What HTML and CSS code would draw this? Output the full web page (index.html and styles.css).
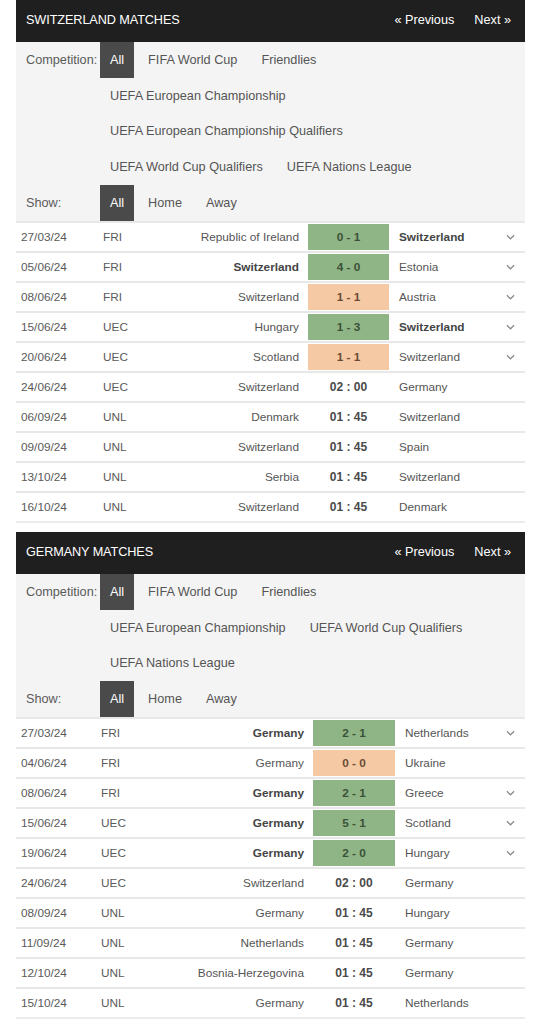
FILE: index.html
```html
<!DOCTYPE html>
<html lang="en">
<head>
<meta charset="utf-8">
<title>Matches</title>
<link rel="stylesheet" href="styles.css">
</head>
<body>
<div class="page">

  <section class="box box-sui">
    <div class="head">
      <div class="title">SWITZERLAND MATCHES</div>
      <div class="nav"><span>« Previous</span><span>Next »</span></div>
    </div>
    <div class="filter">
      <div class="frow"><span class="flabel">Competition:</span><span class="item active">All</span><span class="item">FIFA World Cup</span><span class="item">Friendlies</span></div>
      <div class="frow indent"><span class="item">UEFA European Championship</span></div>
      <div class="frow indent"><span class="item">UEFA European Championship Qualifiers</span></div>
      <div class="frow indent"><span class="item">UEFA World Cup Qualifiers</span><span class="item">UEFA Nations League</span></div>
      <div class="frow"><span class="flabel">Show:</span><span class="item active">All</span><span class="item">Home</span><span class="item">Away</span></div>
    </div>
    <div class="rows">
      <div class="row"><span class="date">27/03/24</span><span class="comp">FRI</span><span class="home">Republic of Ireland</span><span class="score win">0 - 1</span><span class="away b">Switzerland</span><span class="more"><svg class="chev" viewBox="0 0 10 6"><path d="M1 1 L5 5 L9 1"/></svg></span></div>
      <div class="row"><span class="date">05/06/24</span><span class="comp">FRI</span><span class="home b">Switzerland</span><span class="score win">4 - 0</span><span class="away">Estonia</span><span class="more"><svg class="chev" viewBox="0 0 10 6"><path d="M1 1 L5 5 L9 1"/></svg></span></div>
      <div class="row"><span class="date">08/06/24</span><span class="comp">FRI</span><span class="home">Switzerland</span><span class="score draw">1 - 1</span><span class="away">Austria</span><span class="more"><svg class="chev" viewBox="0 0 10 6"><path d="M1 1 L5 5 L9 1"/></svg></span></div>
      <div class="row"><span class="date">15/06/24</span><span class="comp">UEC</span><span class="home">Hungary</span><span class="score win">1 - 3</span><span class="away b">Switzerland</span><span class="more"><svg class="chev" viewBox="0 0 10 6"><path d="M1 1 L5 5 L9 1"/></svg></span></div>
      <div class="row"><span class="date">20/06/24</span><span class="comp">UEC</span><span class="home">Scotland</span><span class="score draw">1 - 1</span><span class="away">Switzerland</span><span class="more"><svg class="chev" viewBox="0 0 10 6"><path d="M1 1 L5 5 L9 1"/></svg></span></div>
      <div class="row"><span class="date">24/06/24</span><span class="comp">UEC</span><span class="home">Switzerland</span><span class="score time">02 : 00</span><span class="away">Germany</span><span class="more"></span></div>
      <div class="row"><span class="date">06/09/24</span><span class="comp">UNL</span><span class="home">Denmark</span><span class="score time">01 : 45</span><span class="away">Switzerland</span><span class="more"></span></div>
      <div class="row"><span class="date">09/09/24</span><span class="comp">UNL</span><span class="home">Switzerland</span><span class="score time">01 : 45</span><span class="away">Spain</span><span class="more"></span></div>
      <div class="row"><span class="date">13/10/24</span><span class="comp">UNL</span><span class="home">Serbia</span><span class="score time">01 : 45</span><span class="away">Switzerland</span><span class="more"></span></div>
      <div class="row"><span class="date">16/10/24</span><span class="comp">UNL</span><span class="home">Switzerland</span><span class="score time">01 : 45</span><span class="away">Denmark</span><span class="more"></span></div>
    </div>
  </section>

  <section class="box box-ger">
    <div class="head">
      <div class="title">GERMANY MATCHES</div>
      <div class="nav"><span>« Previous</span><span>Next »</span></div>
    </div>
    <div class="filter">
      <div class="frow"><span class="flabel">Competition:</span><span class="item active">All</span><span class="item">FIFA World Cup</span><span class="item">Friendlies</span></div>
      <div class="frow indent"><span class="item">UEFA European Championship</span><span class="item">UEFA World Cup Qualifiers</span></div>
      <div class="frow indent"><span class="item">UEFA Nations League</span></div>
      <div class="frow"><span class="flabel">Show:</span><span class="item active">All</span><span class="item">Home</span><span class="item">Away</span></div>
    </div>
    <div class="rows">
      <div class="row"><span class="date">27/03/24</span><span class="comp">FRI</span><span class="home b">Germany</span><span class="score win">2 - 1</span><span class="away">Netherlands</span><span class="more"><svg class="chev" viewBox="0 0 10 6"><path d="M1 1 L5 5 L9 1"/></svg></span></div>
      <div class="row"><span class="date">04/06/24</span><span class="comp">FRI</span><span class="home">Germany</span><span class="score draw">0 - 0</span><span class="away">Ukraine</span><span class="more"></span></div>
      <div class="row"><span class="date">08/06/24</span><span class="comp">FRI</span><span class="home b">Germany</span><span class="score win">2 - 1</span><span class="away">Greece</span><span class="more"><svg class="chev" viewBox="0 0 10 6"><path d="M1 1 L5 5 L9 1"/></svg></span></div>
      <div class="row"><span class="date">15/06/24</span><span class="comp">UEC</span><span class="home b">Germany</span><span class="score win">5 - 1</span><span class="away">Scotland</span><span class="more"><svg class="chev" viewBox="0 0 10 6"><path d="M1 1 L5 5 L9 1"/></svg></span></div>
      <div class="row"><span class="date">19/06/24</span><span class="comp">UEC</span><span class="home b">Germany</span><span class="score win">2 - 0</span><span class="away">Hungary</span><span class="more"><svg class="chev" viewBox="0 0 10 6"><path d="M1 1 L5 5 L9 1"/></svg></span></div>
      <div class="row"><span class="date">24/06/24</span><span class="comp">UEC</span><span class="home">Switzerland</span><span class="score time">02 : 00</span><span class="away">Germany</span><span class="more"></span></div>
      <div class="row"><span class="date">08/09/24</span><span class="comp">UNL</span><span class="home">Germany</span><span class="score time">01 : 45</span><span class="away">Hungary</span><span class="more"></span></div>
      <div class="row"><span class="date">11/09/24</span><span class="comp">UNL</span><span class="home">Netherlands</span><span class="score time">01 : 45</span><span class="away">Germany</span><span class="more"></span></div>
      <div class="row"><span class="date">12/10/24</span><span class="comp">UNL</span><span class="home">Bosnia-Herzegovina</span><span class="score time">01 : 45</span><span class="away">Germany</span><span class="more"></span></div>
      <div class="row"><span class="date">15/10/24</span><span class="comp">UNL</span><span class="home">Germany</span><span class="score time">01 : 45</span><span class="away">Netherlands</span><span class="more"></span></div>
    </div>
  </section>

</div>
</body>
</html>
```

FILE: styles.css
```css
* { box-sizing: border-box; }

html, body {
  margin: 0;
  padding: 0;
  background: #ffffff;
}

body {
  font-family: "Liberation Sans", Arial, sans-serif;
  color: #555555;
}

.page {
  width: 509px;
  margin-left: 16px;
  display: flex;
  flex-direction: column;
  gap: 9px;
}

.box {
  display: flex;
  flex-direction: column;
}

.head {
  height: 42px;
  background: #1f1f1f;
  color: #ffffff;
  display: flex;
  align-items: center;
  justify-content: space-between;
  padding: 0 14px 2px 10px;
  font-size: 12.7px;
}

.title {
  letter-spacing: -0.1px;
}

.nav {
  display: flex;
  gap: 20px;
}

.filter {
  background: #f4f4f4;
  font-size: 12.7px;
}

.frow {
  height: 35.8px;
  display: flex;
  align-items: stretch;
}

.frow.indent {
  padding-left: 84px;
}

.flabel {
  width: 84px;
  padding-left: 10px;
  display: flex;
  align-items: center;
  color: #5a5a5a;
}

.item {
  display: flex;
  align-items: center;
  padding: 0 10px;
  margin-right: 4px;
  color: #555555;
}

.item.active {
  background: #4a4a4a;
  color: #ffffff;
}

.rows {
  border-bottom: 2px solid #ececec;
}

.row {
  display: grid;
  height: 30px;
  border-top: 2px solid #e8e8e8;
  background: #ffffff;
  font-size: 11.8px;
  align-items: center;
}

.box-sui .row {
  grid-template-columns: 82px 60px 150px 81px 106px 30px;
}

.box-ger .row {
  grid-template-columns: 80px 60px 157px 82px 101px 29px;
}

.date {
  padding-left: 5px;
  color: #5a5a5a;
}

.comp {
  padding-left: 5px;
  color: #5a5a5a;
}

.home {
  text-align: right;
  padding-right: 9px;
  color: #555555;
  white-space: nowrap;
}

.away {
  padding-left: 10px;
  color: #555555;
  white-space: nowrap;
}

.b {
  font-weight: bold;
  color: #444444;
}

.score {
  height: 26px;
  margin: 1px 0;
  align-self: start;
  display: flex;
  align-items: center;
  justify-content: center;
  font-weight: bold;
}

.score.win {
  background: #8fb486;
  color: #3c5238;
}

.score.draw {
  background: #f5c9a3;
  color: #6a4c36;
}

.score.time {
  color: #4a4a4a;
  font-size: 12px;
}

.more {
  display: flex;
  align-items: center;
  justify-content: center;
}

.chev {
  width: 9px;
  height: 6px;
  fill: none;
  stroke: #8a8a8a;
  stroke-width: 1.4;
}
```
